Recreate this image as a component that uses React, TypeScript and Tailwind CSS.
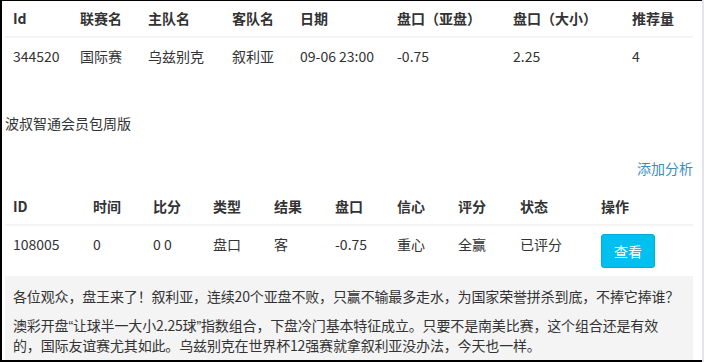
import React from "react";

const t1Cols = "grid-cols-[67px_68px_84px_68px_97px_116px_119px_69px]";
const t2Cols = "grid-cols-[80px_60px_60px_61px_61px_62px_61px_62px_81px_100px]";

export default function App() {
  const h1 = ["Id", "联赛名", "主队名", "客队名", "日期", "盘口（亚盘）", "盘口（大小）", "推荐量"];
  const r1 = ["344520", "国际赛", "乌兹别克", "叙利亚", "09-06 23:00", "-0.75", "2.25", "4"];
  const h2 = ["ID", "时间", "比分", "类型", "结果", "盘口", "信心", "评分", "状态", "操作"];
  const r2 = ["108005", "0", "0 0", "盘口", "客", "-0.75", "重心", "全赢", "已评分"];
  return (
    <div className="w-[707px] h-[362px] flex bg-white overflow-hidden text-[#333] font-['Noto_Sans_CJK_SC','Noto_Sans',sans-serif] text-[14px] leading-[20px]">
      <div className="w-[702px] h-[362px] shrink-0 border-l-2 border-t border-b-2 border-black overflow-hidden pl-[3px] pr-[9px]">
        <div className="-mt-px">
          <div className={`grid ${t1Cols} border-b-2 border-[#f4f4f4]`}>
            {h1.map((h) => (
              <div key={h} className="px-2 py-2 font-bold whitespace-nowrap">{h}</div>
            ))}
          </div>
          <div className={`grid ${t1Cols}`}>
            {r1.map((c, i) => (
              <div key={i} className="px-2 py-2 whitespace-nowrap">{c}</div>
            ))}
          </div>
        </div>
        <div className="mt-[39px]">波叔智通会员包周版</div>
        <div className="mt-[25px] text-right text-[#3c8dbc]">添加分析</div>
        <div className="mt-[10px]">
          <div className={`grid ${t2Cols} border-b-2 border-[#f4f4f4]`}>
            {h2.map((h) => (
              <div key={h} className="px-2 py-2 font-bold whitespace-nowrap">{h}</div>
            ))}
          </div>
          <div className={`grid ${t2Cols} items-start border-b border-[#f4f4f4]`}>
            {r2.map((c, i) => (
              <div key={i} className="px-2 py-2 whitespace-nowrap">{c}</div>
            ))}
            <div className="px-2 py-2">
              <button className="bg-[#00c0ef] border border-[#00acd6] rounded-[3px] text-white px-3 py-[6px] leading-[20px] text-[14px]">
                查看
              </button>
            </div>
          </div>
          <div className="bg-[#f4f4f4] px-2 pt-[10px] pb-3 leading-[19px] whitespace-nowrap tracking-[-0.15px]">
            <p>各位观众，盘王来了！叙利亚，连续20个亚盘不败，只赢不输最多走水，为国家荣誉拼杀到底，不捧它捧谁？</p>
            <div className="mt-[10px]">
              <div>
                澳彩开盘<span className="font-['Liberation_Sans',sans-serif]">“</span>让球半一大小2.25球<span className="font-['Liberation_Sans',sans-serif]">”</span>指数组合，下盘冷门基本特征成立。只要不是南美比赛，这个组合还是有效
              </div>
              <div>的，国际友谊赛尤其如此。乌兹别克在世界杯12强赛就拿叙利亚没办法，今天也一样。</div>
            </div>
          </div>
        </div>
      </div>
      <div className="w-[2px] h-[362px] shrink-0 bg-[#e4e4ea]" />
    </div>
  );
}
